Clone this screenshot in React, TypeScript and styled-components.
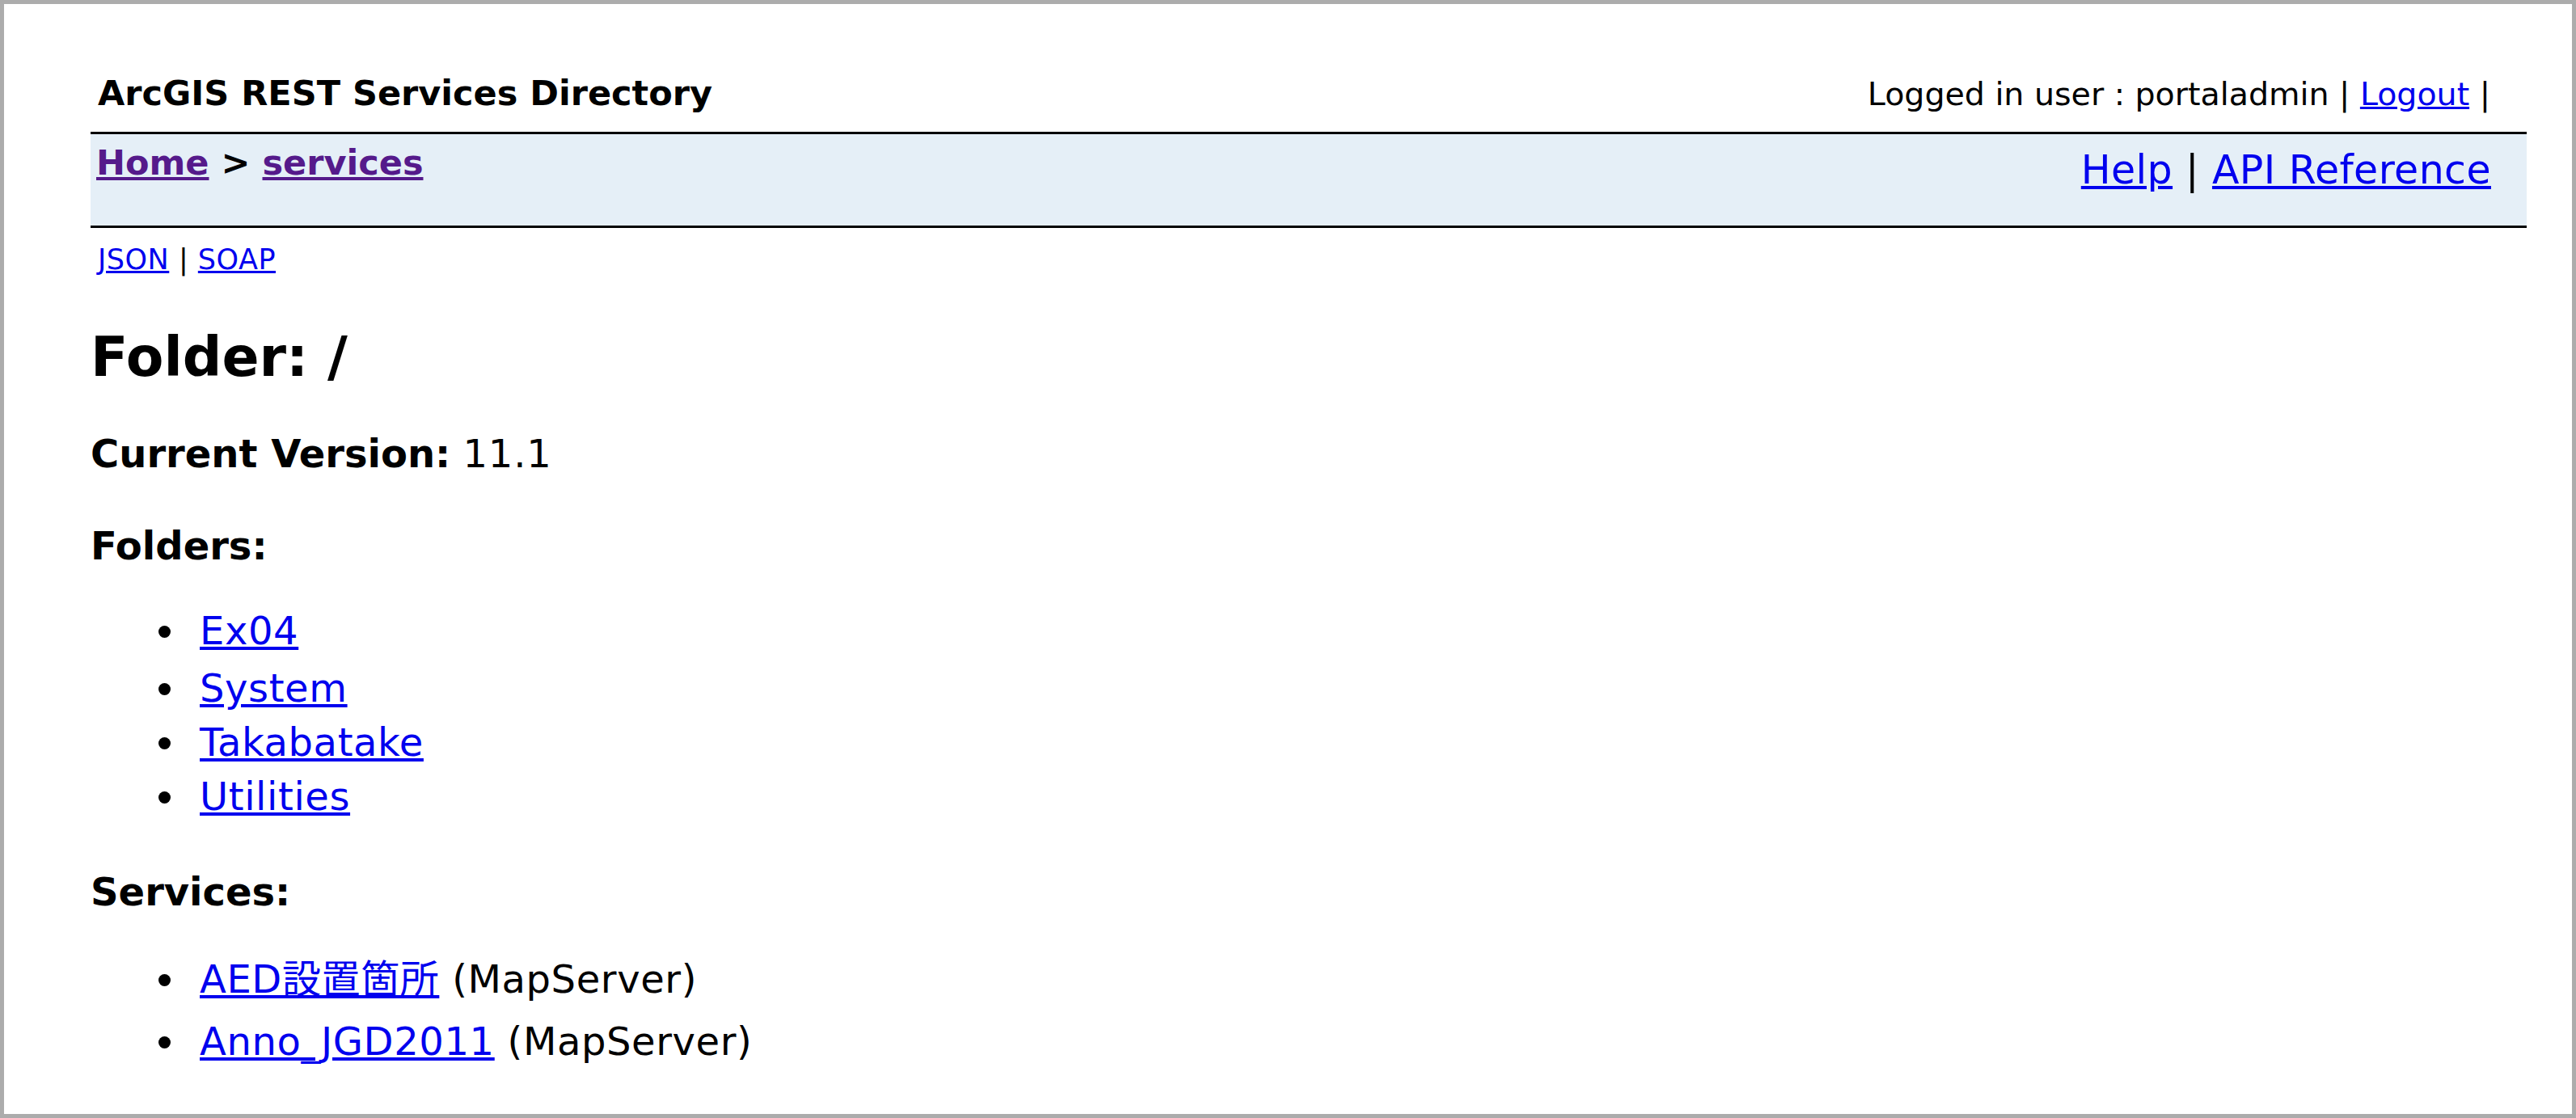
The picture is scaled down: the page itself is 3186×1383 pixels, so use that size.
import React from "react";
import styled, { createGlobalStyle } from "styled-components";

const GlobalStyle = createGlobalStyle`
  html, body { margin: 0; padding: 0; background: #fff; }
  body {
    font-family: "DejaVu Sans", Verdana, "Noto Sans CJK JP", sans-serif;
    color: #000;
  }
  *, *::before, *::after { box-sizing: border-box; }
`;

const Frame = styled.div`
  height: 100vh;
  border: 5px solid #acacac;
  background: #fff;
  overflow: hidden;
  padding: 0 56px 0 107px;
`;

const Header = styled.header`
  display: flex;
  justify-content: space-between;
  align-items: baseline;
  margin-top: 80px;
  height: 60px;
  line-height: 60px;
`;

const Title = styled.div`
  padding-left: 9px;
  font-size: 43px;
  font-weight: bold;
`;

const UserInfo = styled.div`
  padding-right: 45px;
  font-size: 39.5px;
`;

const Link = styled.a<{ $visited?: boolean }>`
  color: ${(p) => (p.$visited ? "#551a8b" : "#0000ee")};
  text-decoration: underline;
`;

const NavBar = styled.nav`
  display: flex;
  justify-content: space-between;
  align-items: flex-start;
  margin-top: 18px;
  height: 119px;
  border-top: 3px solid #000;
  border-bottom: 3px solid #000;
  background: #e5eff7;
  padding: 0 44px 0 7px;
`;

const Breadcrumbs = styled.div`
  padding-top: 10px;
  font-size: 43px;
  font-weight: bold;
  line-height: 50px;
`;

const HelpLinks = styled.div`
  padding-top: 16px;
  font-size: 49px;
  line-height: 57px;
  letter-spacing: 0.4px;
`;

const FormatLinks = styled.div`
  margin-top: 19px;
  padding-left: 9px;
  font-size: 35px;
  line-height: 40px;
  letter-spacing: 0.5px;
`;

const FolderHeading = styled.h2`
  margin: 62px 0 0;
  font-size: 68px;
  line-height: 77px;
  font-weight: bold;
`;

const Body = styled.div`
  margin-top: 53px;
  font-size: 48px;
  line-height: 57px;
`;

const InfoLine = styled.div<{ $gap?: number }>`
  margin-bottom: ${(p) => p.$gap ?? 0}px;
`;

const Label = styled.b`
  font-weight: bold;
`;

const Value = styled.span`
  letter-spacing: 0.8px;
`;

const BulletList = styled.ul<{ $row: number; $top: number; $bottom: number }>`
  list-style: none;
  margin: ${(p) => p.$top}px 0 ${(p) => p.$bottom}px;
  padding: 0 0 0 84px;
  line-height: ${(p) => p.$row}px;
`;

const Item = styled.li<{ $extra?: number }>`
  margin-bottom: ${(p) => p.$extra ?? 0}px;
  white-space: nowrap;
  letter-spacing: 0.6px;

  &::before {
    content: "";
    display: inline-block;
    width: 15px;
    height: 15px;
    border-radius: 50%;
    background: #000;
    margin-right: 36px;
    vertical-align: 8px;
  }
`;

const folders = ["Ex04", "System", "Takabatake", "Utilities"];
const services = [
  { name: "AED設置箇所", type: "MapServer" },
  { name: "Anno_JGD2011", type: "MapServer" },
];

export default function App() {
  return (
    <>
      <GlobalStyle />
      <Frame>
        <Header>
          <Title>ArcGIS REST Services Directory</Title>
          <UserInfo>
            Logged in user : portaladmin | <Link href="#">Logout</Link> |
          </UserInfo>
        </Header>
        <NavBar>
          <Breadcrumbs>
            <Link href="#" $visited>
              Home
            </Link>{" "}
            &gt;{" "}
            <Link href="#" $visited>
              services
            </Link>
          </Breadcrumbs>
          <HelpLinks>
            <Link href="#">Help</Link> | <Link href="#">API Reference</Link>
          </HelpLinks>
        </NavBar>
        <FormatLinks>
          <Link href="#">JSON</Link> | <Link href="#">SOAP</Link>
        </FormatLinks>
        <FolderHeading>Folder: /</FolderHeading>
        <Body>
          <InfoLine $gap={57}>
            <Label>Current Version:</Label> <Value>11.1</Value>
          </InfoLine>
          <InfoLine>
            <Label>Folders:</Label>
          </InfoLine>
          <BulletList $row={67} $top={43} $bottom={56}>
            {folders.map((f, i) => (
              <Item key={f} $extra={i === 0 ? 4 : 0}>
                <Link href="#">{f}</Link>
              </Item>
            ))}
          </BulletList>
          <InfoLine>
            <Label>Services:</Label>
          </InfoLine>
          <BulletList $row={77} $top={41} $bottom={0}>
            {services.map((s) => (
              <Item key={s.name}>
                <Link href="#">{s.name}</Link> ({s.type})
              </Item>
            ))}
          </BulletList>
        </Body>
      </Frame>
    </>
  );
}
